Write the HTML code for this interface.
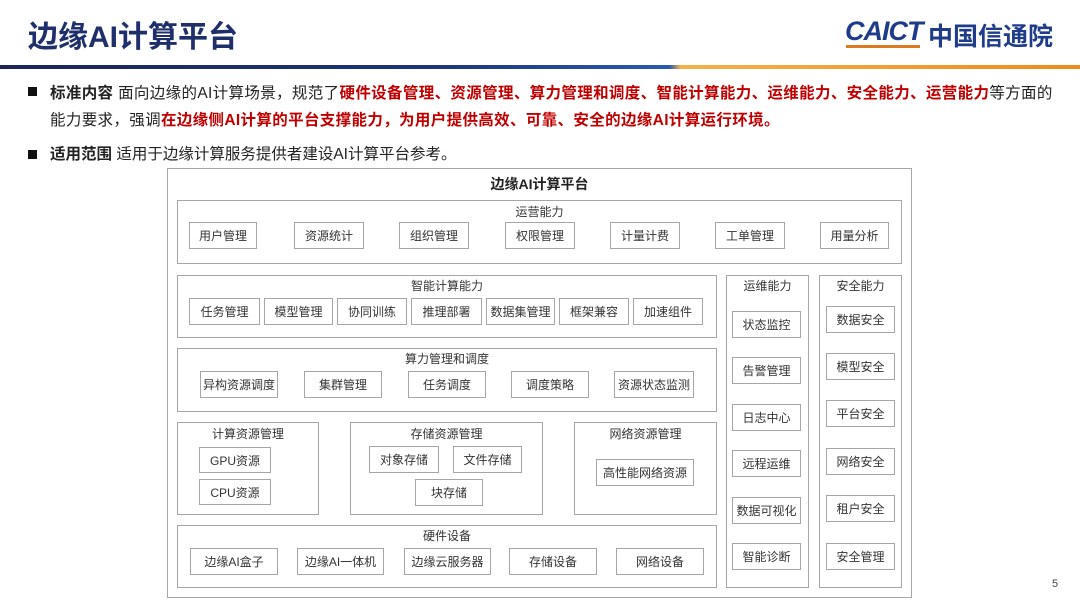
<!DOCTYPE html>
<html><head><meta charset="utf-8"><style>
body{margin:0;width:1080px;height:608px;background:#fff;position:relative;overflow:hidden;font-family:"Liberation Sans","Noto Sans CJK SC",sans-serif;}
.a{position:absolute;box-sizing:border-box;}
.s{position:absolute;box-sizing:border-box;border:1px solid #a6a6a6;background:#fff;}
.b{position:absolute;box-sizing:border-box;border:1px solid #a6a6a6;background:#fff;font-size:12px;color:#333;display:flex;align-items:center;justify-content:center;white-space:nowrap;}
.t{position:absolute;font-size:12px;color:#333;text-align:center;white-space:nowrap;}
.r{color:#c00000;font-weight:bold;}
</style></head><body>
<div class="a" style="left:28px;top:12px;font-size:30px;font-weight:bold;color:#1f2f6b;">边缘AI计算平台</div>
<div class="a" style="left:845px;top:16px;font-size:27px;font-weight:bold;color:#1f3c8a;font-style:italic;letter-spacing:-1px">CAICT</div>
<div class="a" style="left:846px;top:45px;width:74px;height:3px;background:#e07a20"></div>
<div class="a" style="left:928px;top:17px;font-size:25px;font-weight:bold;color:#1f3c8a">中国信通院</div>
<div class="a" style="left:0;top:65px;width:1080px;height:4px;background:linear-gradient(90deg,#1b2558 0%,#1d3478 40%,#2a5bb0 62%,#f2b24a 63%,#f08a1c 100%)"></div>
<div class="a" style="left:28px;top:87px;width:9px;height:9px;background:#111"></div>
<div class="a" style="left:50px;top:80px;width:1030px;font-size:15.5px;line-height:27px;color:#222;white-space:nowrap;letter-spacing:0.35px"><b>标准内容</b> 面向边缘的AI计算场景，规范了<span class="r">硬件设备管理、资源管理、算力管理和调度、智能计算能力、运维能力、安全能力、运营能力</span>等方面的<br>能力要求，强调<span class="r">在边缘侧AI计算的平台支撑能力，为用户提供高效、可靠、安全的边缘AI计算运行环境。</span></div>
<div class="a" style="left:28px;top:150px;width:9px;height:9px;background:#111"></div>
<div class="a" style="left:50px;top:141px;font-size:15.5px;line-height:27px;color:#222"><b>适用范围</b> 适用于边缘计算服务提供者建设AI计算平台参考。</div>

<div class="s" style="left:167px;top:168px;width:745px;height:430px"></div>
<div class="t" style="left:167px;width:745px;top:174px;font-size:14px;font-weight:bold;color:#222">边缘AI计算平台</div>

<div class="s" style="left:177px;top:200px;width:725px;height:64px"></div>
<div class="t" style="left:177px;width:725px;top:203px">运营能力</div>
<div class="b" style="left:189px;top:222px;width:68px;height:27px">用户管理</div>
<div class="b" style="left:294px;top:222px;width:70px;height:27px">资源统计</div>
<div class="b" style="left:399px;top:222px;width:70px;height:27px">组织管理</div>
<div class="b" style="left:505px;top:222px;width:70px;height:27px">权限管理</div>
<div class="b" style="left:610px;top:222px;width:70px;height:27px">计量计费</div>
<div class="b" style="left:715px;top:222px;width:70px;height:27px">工单管理</div>
<div class="b" style="left:820px;top:222px;width:69px;height:27px">用量分析</div>

<div class="s" style="left:177px;top:275px;width:540px;height:63px"></div>
<div class="t" style="left:177px;width:540px;top:277px">智能计算能力</div>
<div class="b" style="left:189px;top:298px;width:71px;height:27px">任务管理</div>
<div class="b" style="left:264px;top:298px;width:69px;height:27px">模型管理</div>
<div class="b" style="left:337px;top:298px;width:70px;height:27px">协同训练</div>
<div class="b" style="left:411px;top:298px;width:71px;height:27px">推理部署</div>
<div class="b" style="left:486px;top:298px;width:69px;height:27px">数据集管理</div>
<div class="b" style="left:559px;top:298px;width:70px;height:27px">框架兼容</div>
<div class="b" style="left:633px;top:298px;width:70px;height:27px">加速组件</div>

<div class="s" style="left:177px;top:348px;width:540px;height:64px"></div>
<div class="t" style="left:177px;width:540px;top:350px">算力管理和调度</div>
<div class="b" style="left:200px;top:371px;width:78px;height:27px">异构资源调度</div>
<div class="b" style="left:304px;top:371px;width:78px;height:27px">集群管理</div>
<div class="b" style="left:408px;top:371px;width:78px;height:27px">任务调度</div>
<div class="b" style="left:511px;top:371px;width:78px;height:27px">调度策略</div>
<div class="b" style="left:614px;top:371px;width:80px;height:27px">资源状态监测</div>

<div class="s" style="left:177px;top:422px;width:142px;height:93px"></div>
<div class="t" style="left:177px;width:142px;top:425px">计算资源管理</div>
<div class="b" style="left:199px;top:447px;width:72px;height:26px">GPU资源</div>
<div class="b" style="left:199px;top:479px;width:72px;height:26px">CPU资源</div>
<div class="s" style="left:350px;top:422px;width:193px;height:93px"></div>
<div class="t" style="left:350px;width:193px;top:425px">存储资源管理</div>
<div class="b" style="left:369px;top:446px;width:70px;height:27px">对象存储</div>
<div class="b" style="left:453px;top:446px;width:69px;height:27px">文件存储</div>
<div class="b" style="left:415px;top:479px;width:68px;height:27px">块存储</div>
<div class="s" style="left:574px;top:422px;width:143px;height:93px"></div>
<div class="t" style="left:574px;width:143px;top:425px">网络资源管理</div>
<div class="b" style="left:596px;top:459px;width:98px;height:27px">高性能网络资源</div>

<div class="s" style="left:177px;top:525px;width:540px;height:63px"></div>
<div class="t" style="left:177px;width:540px;top:527px">硬件设备</div>
<div class="b" style="left:190px;top:548px;width:88px;height:27px">边缘AI盒子</div>
<div class="b" style="left:297px;top:548px;width:87px;height:27px">边缘AI一体机</div>
<div class="b" style="left:404px;top:548px;width:87px;height:27px">边缘云服务器</div>
<div class="b" style="left:509px;top:548px;width:88px;height:27px">存储设备</div>
<div class="b" style="left:616px;top:548px;width:88px;height:27px">网络设备</div>

<div class="s" style="left:726px;top:275px;width:83px;height:313px"></div>
<div class="t" style="left:726px;width:83px;top:277px">运维能力</div>
<div class="b" style="left:732px;top:311px;width:69px;height:27px">状态监控</div>
<div class="b" style="left:732px;top:357px;width:69px;height:27px">告警管理</div>
<div class="b" style="left:732px;top:404px;width:69px;height:27px">日志中心</div>
<div class="b" style="left:732px;top:450px;width:69px;height:27px">远程运维</div>
<div class="b" style="left:732px;top:497px;width:69px;height:27px">数据可视化</div>
<div class="b" style="left:732px;top:543px;width:69px;height:27px">智能诊断</div>

<div class="s" style="left:819px;top:275px;width:83px;height:313px"></div>
<div class="t" style="left:819px;width:83px;top:277px">安全能力</div>
<div class="b" style="left:826px;top:306px;width:69px;height:27px">数据安全</div>
<div class="b" style="left:826px;top:353px;width:69px;height:27px">模型安全</div>
<div class="b" style="left:826px;top:400px;width:69px;height:27px">平台安全</div>
<div class="b" style="left:826px;top:448px;width:69px;height:27px">网络安全</div>
<div class="b" style="left:826px;top:495px;width:69px;height:27px">租户安全</div>
<div class="b" style="left:826px;top:543px;width:69px;height:27px">安全管理</div>

<div class="a" style="left:1052px;top:578px;font-size:11px;color:#444">5</div>
</body></html>
